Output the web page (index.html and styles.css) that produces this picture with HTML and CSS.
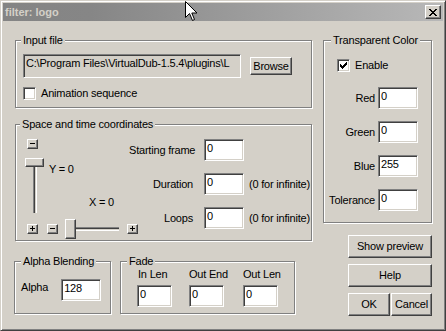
FILE: index.html
```html
<!DOCTYPE html>
<html lang="en">
<head>
  <meta charset="UTF-8">
  <title>filter: logo</title>
  <link rel="stylesheet" href="styles.css">
</head>
<body>

  <div class="window">
    <div class="titlebar">
      <span class="title">filter: logo</span>
      <span class="close-btn">
        <svg width="8" height="7" viewBox="0 0 8 7" shape-rendering="crispEdges"><path d="M0 0h2v1H0zM6 0h2v1H6zM1 1h2v1H1zM5 1h2v1H5zM2 2h4v1H2zM3 3h2v1H3zM2 4h4v1H2zM1 5h2v1H1zM5 5h2v1H5zM0 6h2v1H0zM6 6h2v1H6z"/></svg>
      </span>
    </div>

    <div class="dialog">
      <div class="col-left">

        <fieldset class="group input-group">
          <legend>Input file</legend>
          <div class="group-body">
            <div class="file-row">
              <input class="field path" type="text" value="C:\Program Files\VirtualDub-1.5.4\plugins\L" readonly>
              <button class="btn browse">Browse</button>
            </div>
            <label class="check-row"><span class="check"></span>Animation sequence</label>
          </div>
        </fieldset>

        <fieldset class="group coords-group">
          <legend>Space and time coordinates</legend>
          <div class="group-body coords-body">
            <div class="sliders">
              <div class="tiny minus first"></div>
              <div class="vrow">
                <div class="vslider">
                  <div class="vthumb"></div>
                  <div class="vtrack"></div>
                </div>
                <div class="axis-labels">
                  <span class="axis-y">Y = 0</span>
                  <span class="axis-x">X = 0</span>
                </div>
              </div>
              <div class="hrow">
                <div class="tiny plus"></div>
                <div class="tiny minus"></div>
                <div class="hslider">
                  <div class="hthumb"></div>
                  <div class="htrack"></div>
                </div>
                <div class="tiny plus last"></div>
              </div>
            </div>
            <div class="coords">
              <span class="lbl">Starting frame</span><input class="field" type="text" value="0"><span></span>
              <span class="lbl">Duration</span><input class="field" type="text" value="0"><span class="note">(0 for infinite)</span>
              <span class="lbl">Loops</span><input class="field" type="text" value="0"><span class="note">(0 for infinite)</span>
            </div>
          </div>
        </fieldset>

        <div class="bottom-row">
          <fieldset class="group alpha-group">
            <legend>Alpha Blending</legend>
            <div class="group-body alpha-row">
              <span class="lbl">Alpha</span>
              <input class="field" type="text" value="128">
            </div>
          </fieldset>

          <fieldset class="group fade-group">
            <legend>Fade</legend>
            <div class="group-body fade-grid">
              <div class="fade-col"><span class="first-lbl">In Len</span><input class="field small" type="text" value="0"></div>
              <div class="fade-col"><span>Out End</span><input class="field small" type="text" value="0"></div>
              <div class="fade-col"><span>Out Len</span><input class="field small" type="text" value="0"></div>
            </div>
          </fieldset>
        </div>

      </div>

      <div class="col-right">
        <fieldset class="group color-group">
          <legend>Transparent Color</legend>
          <div class="group-body">
            <label class="check-row enable">
              <span class="check">
                <svg width="7" height="7" viewBox="0 0 7 7" shape-rendering="crispEdges"><path d="M0 2h1v3H0zM1 3h1v3H1zM2 4h1v3H2zM3 3h1v3H3zM4 2h1v3H4zM5 1h1v3H5zM6 0h1v3H6z"/></svg>
              </span>Enable
            </label>
            <div class="color-grid">
              <span class="lbl">Red</span><input class="field" type="text" value="0">
              <span class="lbl">Green</span><input class="field" type="text" value="0">
              <span class="lbl">Blue</span><input class="field" type="text" value="255">
              <span class="lbl">Tolerance</span><input class="field" type="text" value="0">
            </div>
          </div>
        </fieldset>

        <div class="actions">
          <button class="btn wide">Show preview</button>
          <button class="btn wide">Help</button>
          <div class="ok-row">
            <button class="btn ok">OK</button>
            <button class="btn cancel">Cancel</button>
          </div>
        </div>
      </div>
    </div>

    <svg class="cursor" width="14" height="22" viewBox="0 0 14 22">
      <path d="M0.5 0.5V16.5L4.5 12.5L7.5 19.5L9.5 18.5L6.8 12H12Z" fill="#fff" stroke="#000" stroke-width="1"/>
    </svg>
  </div>

</body>
</html>
```

FILE: styles.css
```css
body {
  margin: 0;
  background: #d4d0c8;
  font-family: 'Liberation Sans', Arial, sans-serif;
  font-size: 11px;
  line-height: 13px;
  letter-spacing: -0.2px;
  color: #000;
}

.window {
  position: relative;
  width: 446px;
  height: 331px;
  box-sizing: border-box;
  padding: 2px;
  border: 1px solid;
  border-color: #d4d0c8 #404040 #404040 #d4d0c8;
  box-shadow: inset 1px 1px #fff, inset -1px -1px #808080;
  background: #d4d0c8;
}

.titlebar {
  display: flex;
  align-items: center;
  height: 18px;
  padding: 0 2px;
  background: linear-gradient(to right, #848484 0, #868686 20%, #b8b8b8 100%);
}

.title {
  flex: 1;
  font-weight: bold;
  color: #d4d0c8;
  line-height: 18px;
  letter-spacing: 0;
}

.close-btn {
  display: flex;
  align-items: center;
  justify-content: center;
  box-sizing: border-box;
  width: 16px;
  height: 14px;
  border: 1px solid;
  border-color: #fff #404040 #404040 #fff;
  box-shadow: inset -1px -1px #808080;
  background: #d4d0c8;
}

.cursor {
  position: absolute;
  left: 184px;
  top: 0;
}

.dialog {
  display: flex;
  gap: 11px;
  padding: 13px 0 0 12px;
}

.col-left {
  width: 297px;
}

.col-right {
  width: 109px;
}

/* group boxes */
.group {
  margin: 0;
  padding: 0;
  min-width: 0;
  border: 1px solid #808080;
  box-shadow: inset 1px 1px #fff, 1px 1px #fff;
}

.group legend {
  padding: 0 2px;
  margin-left: 5px;
  line-height: 13px;
  background: #d4d0c8;
}

.field {
  box-sizing: border-box;
  width: 40px;
  height: 22px;
  margin: 0;
  padding: 0 2px 5px;
  border: 1px solid;
  border-color: #808080 #fff #fff #808080;
  box-shadow: inset 1px 1px #404040, inset -1px -1px #d4d0c8;
  background: #fff;
  font: inherit;
  letter-spacing: inherit;
  line-height: 13px;
  color: #000;
  outline: none;
}

.btn {
  box-sizing: border-box;
  margin: 0;
  padding: 0;
  border: 1px solid;
  border-color: #fff #404040 #404040 #fff;
  box-shadow: inset -1px -1px #808080;
  background: #d4d0c8;
  font: inherit;
  letter-spacing: inherit;
  color: #000;
}

.check-row {
  display: flex;
  align-items: center;
  gap: 5px;
}

.check {
  box-sizing: border-box;
  width: 13px;
  height: 13px;
  padding: 2px;
  border: 1px solid;
  border-color: #808080 #fff #fff #808080;
  box-shadow: inset 1px 1px #404040, inset -1px -1px #d4d0c8;
  background: #fff;
}

.check svg {
  display: block;
}

/* input file */
.input-group .group-body {
  padding: 7px 0 7px 7px;
}

.file-row {
  display: flex;
  align-items: center;
  gap: 9px;
}

.field.path {
  width: 218px;
  height: 24px;
  padding-bottom: 7px;
  background: #d4d0c8;
}

.btn.browse {
  width: 42px;
  height: 18px;
}

.input-group .check-row {
  margin-top: 9px;
}

/* space and time coordinates */
.coords-group {
  margin-top: 10px;
}

.coords-group legend {
  margin-left: 4px;
}

.coords-body {
  display: flex;
  align-items: flex-start;
  padding: 8px 0 0 9px;
}

.sliders {
  flex: none;
  width: 104px;
}

.tiny {
  flex: none;
  box-sizing: border-box;
  width: 11px;
  height: 10px;
  border: 1px solid;
  border-color: #fff #404040 #404040 #fff;
  box-shadow: inset -1px -1px #808080;
  background: linear-gradient(#000, #000) 2px 3px / 5px 1px no-repeat, #d4d0c8;
}

.tiny.plus {
  background: linear-gradient(#000, #000) 2px 3px / 5px 1px no-repeat,
              linear-gradient(#000, #000) 4px 1px / 1px 5px no-repeat, #d4d0c8;
}

.tiny.first {
  margin-left: 2px;
}

.vrow {
  display: flex;
}

.vslider {
  margin-top: 9px;
  width: 19px;
}

.vthumb {
  box-sizing: border-box;
  height: 9px;
  border: 1px solid;
  border-color: #fff #404040 #404040 #fff;
  box-shadow: inset -1px -1px #808080;
}

.vtrack {
  box-sizing: border-box;
  width: 4px;
  height: 46px;
  margin-left: 8px;
  border-left: 1px solid #808080;
  border-right: 1px solid #fff;
  background: linear-gradient(to right, #404040 1px, #d4d0c8 1px);
}

.axis-labels {
  display: flex;
  flex-direction: column;
  margin-left: 5px;
  margin-top: 14px;
  white-space: nowrap;
}

.axis-x {
  margin-top: 20px;
  margin-left: 40px;
}

.hrow {
  display: flex;
  align-items: center;
  height: 22px;
  margin-top: 5px;
}

.hrow .tiny.plus {
  margin-left: 2px;
}

.hrow .tiny.minus {
  margin-left: 9px;
}

.hrow .tiny.last {
  margin-left: 8px;
}

.hslider {
  flex: none;
  display: flex;
  align-items: center;
  margin-left: 7px;
}

.hthumb {
  box-sizing: border-box;
  width: 11px;
  height: 20px;
  border: 1px solid;
  border-color: #fff #404040 #404040 #fff;
  box-shadow: inset -1px -1px #808080;
}

.htrack {
  box-sizing: border-box;
  width: 43px;
  height: 4px;
  border-top: 1px solid #808080;
  border-bottom: 1px solid #fff;
  background: linear-gradient(#404040 1px, #d4d0c8 1px);
}

.coords {
  display: grid;
  grid-template-columns: 64px 40px auto;
  grid-auto-rows: 22px;
  column-gap: 11px;
  row-gap: 12px;
  align-items: center;
  white-space: nowrap;
}

.coords .lbl {
  text-align: right;
}

.coords .note {
  margin-left: -6px;
}

/* bottom groups */
.bottom-row {
  display: flex;
  gap: 9px;
  margin-top: 14px;
  margin-left: -1px;
}

.alpha-group {
  width: 97px;
  height: 59px;
  box-sizing: border-box;
}

.alpha-group legend {
  margin-left: 6px;
}

.alpha-row {
  display: flex;
  align-items: flex-start;
  padding: 11px 0 0 6px;
}

.alpha-row .lbl {
  margin-top: 2px;
  margin-right: 13px;
}

.fade-group {
  width: 175px;
  height: 59px;
  box-sizing: border-box;
}

.fade-group legend {
  margin-left: 6px;
}

.fade-grid {
  display: grid;
  grid-template-columns: 52px 54px auto;
  padding-left: 16px;
}

.fade-col {
  display: flex;
  flex-direction: column;
  align-items: flex-start;
  white-space: nowrap;
}

.fade-col .first-lbl {
  margin-left: 1px;
}

.field.small {
  width: 35px;
  margin-top: 4px;
}

/* transparent color */
.color-group legend {
  margin-left: 7px;
}

.color-group .group-body {
  padding: 12px 0 11px 0;
}

.enable {
  margin-left: 13px;
}

.color-grid {
  display: grid;
  grid-template-columns: 50px 40px;
  grid-auto-rows: 22px;
  column-gap: 3px;
  row-gap: 12px;
  align-items: center;
  margin: 15px 0 0 1px;
}

.color-grid .lbl {
  text-align: right;
}

.actions {
  display: flex;
  flex-direction: column;
  gap: 6px;
  margin: 12px 0 0 25px;
}

.btn.wide {
  width: 84px;
  height: 23px;
}

.ok-row {
  display: flex;
  gap: 1px;
}

.btn.ok {
  width: 42px;
  height: 23px;
}

.btn.cancel {
  width: 41px;
  height: 23px;
}
```
